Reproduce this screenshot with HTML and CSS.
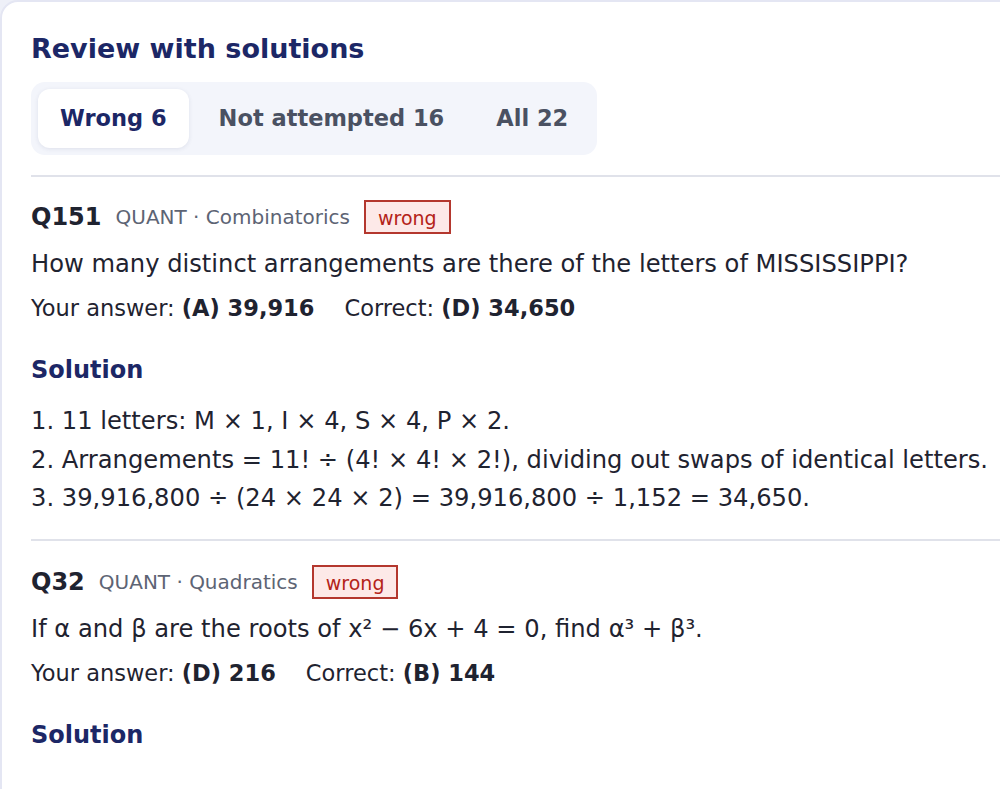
FILE: index.html
```html
<!DOCTYPE html>
<html>
<head>
<meta charset="utf-8">
<link rel="stylesheet" href="styles.css">
</head>
<body>
<div class="card">
  <h1 class="title">Review with solutions</h1>
  <div class="tabs">
    <div class="tab active">Wrong 6</div>
    <div class="tab">Not attempted 16</div>
    <div class="tab">All 22</div>
  </div>
  <div class="q">
    <div class="qhead"><span class="qid">Q151</span><span class="meta">QUANT · Combinatorics</span><span class="badge">wrong</span></div>
    <p class="qtext">How many distinct arrangements are there of the letters of MISSISSIPPI?</p>
    <p class="ans">Your answer: <b>(A) 39,916</b><span class="gap"></span>Correct: <b>(D) 34,650</b></p>
    <h2 class="sol">Solution</h2>
    <ol class="steps">
      <li>11 letters: M × 1, I × 4, S × 4, P × 2.</li>
      <li>Arrangements = 11! ÷ (4! × 4! × 2!), dividing out swaps of identical letters.</li>
      <li>39,916,800 ÷ (24 × 24 × 2) = 39,916,800 ÷ 1,152 = 34,650.</li>
    </ol>
  </div>
  <div class="q">
    <div class="qhead"><span class="qid">Q32</span><span class="meta">QUANT · Quadratics</span><span class="badge">wrong</span></div>
    <p class="qtext">If α and β are the roots of x² − 6x + 4 = 0, find α³ + β³.</p>
    <p class="ans">Your answer: <b>(D) 216</b><span class="gap"></span>Correct: <b>(B) 144</b></p>
    <h2 class="sol">Solution</h2>
  </div>
</div>
</body>
</html>
```
FILE: styles.css
```css
html, body {
  margin: 0;
  padding: 0;
  background: #eef0f8;
  font-family: "DejaVu Sans", sans-serif;
  color: #1f2330;
  overflow: hidden;
}
.card {
  width: 1100px;
  min-height: 900px;
  background: #ffffff;
  border: 2px solid #e4e6f3;
  border-radius: 18px;
  padding: 30px 0 0 29px;
  box-sizing: border-box;
}
.title {
  margin: 0;
  font-size: 27px;
  font-weight: bold;
  color: #1c2766;
  line-height: 34px;
}
.tabs {
  display: inline-flex;
  margin-top: 16px;
  background: #f3f5fb;
  border-radius: 14px;
  padding: 7px;
  gap: 8px;
}
.tab {
  font-size: 22.5px;
  font-weight: bold;
  color: #4a5162;
  padding: 0 22px;
  height: 59px;
  line-height: 59px;
  border-radius: 12px;
}
.tab.active {
  background: #ffffff;
  color: #1c2766;
  box-shadow: 0 1px 4px rgba(40, 50, 100, 0.10);
}
.q {
  border-top: 2px solid #e0e2ea;
  margin-top: 20px;
  width: 1000px;
  padding-top: 23px;
}
.q + .q {
  margin-top: 0;
  padding-top: 24px;
}
.qhead {
  display: flex;
  align-items: center;
  gap: 14px;
  height: 34px;
}
.qid {
  font-size: 24px;
  font-weight: bold;
  color: #1f2330;
}
.meta {
  font-size: 20px;
  color: #5d6474;
}
.badge {
  font-size: 19px;
  color: #b42318;
  background: #fde9e8;
  border: 2px solid #b4372e;
  padding: 0 12px;
  height: 34px;
  line-height: 32px;
  box-sizing: border-box;
}
.qtext {
  margin: 14px 0 0;
  font-size: 24.2px;
  line-height: 32px;
  color: #1f2330;
}
.ans {
  margin: 13px 0 0;
  font-size: 22.5px;
  line-height: 30px;
  color: #1f2330;
}
.ans b {
  font-weight: bold;
}
.gap {
  display: inline-block;
  width: 30px;
}
.sol {
  margin: 32px 0 0;
  font-size: 24px;
  font-weight: bold;
  color: #1c2766;
  line-height: 30px;
}
.steps {
  margin: 17px 0 0;
  padding: 0;
  list-style: decimal inside;
  font-size: 24.2px;
  line-height: 38.7px;
  color: #1f2330;
  padding-bottom: 21px;
}
```
